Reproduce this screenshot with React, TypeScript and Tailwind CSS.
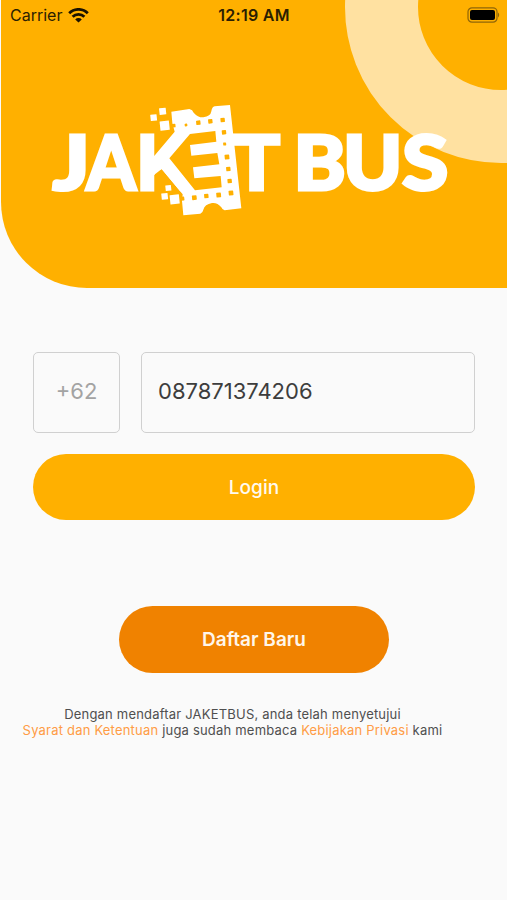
import React, { useState } from "react";

// perforations along the edge of the film strip
const holes = [
  [101, 92, 11], [138, 90, 8], [175, 83, 13], [211, 79, 13], [248, 75, 13],
  [252, 112, 13], [254, 147, 9], [261, 186, 14], [265, 222, 13], [269, 258, 13],
  [273, 294, 14], [236, 300, 14], [199, 303, 13], [163, 308, 14], [127, 311, 12],
];

const pixels = [
  [68, 49, 20], [41, 68, 19], [74, 92, 28],
  [85, 279, 17], [74, 304, 19], [104, 313, 28],
];

// x, horizontal stretch
const letters: [string, number, number][] = [
  ["J", 52.5, 1.13],
  ["A", 86.5, 0.92],
  ["K", 136, 1],
  ["T", 233, 1.02],
  ["B", 293.5, 1.03],
  ["U", 343, 1.04],
  ["S", 402, 1.1],
];

function StatusBar() {
  return (
    <div className="relative grid grid-cols-3 items-center h-[30px] pl-[10px] pr-[7px] text-[#2b1e02]">
      <div className="flex items-center gap-[6px]">
        <span className="text-[16px]">Carrier</span>
        <svg width="21" height="15" viewBox="0 0 21 15" fill="none" stroke="#1a1200" strokeWidth="2.8">
          <path d="M1.2 5.2a13.2 13.2 0 0 1 18.6 0" />
          <path d="M4.6 8.7a8.4 8.4 0 0 1 11.8 0" />
          <path d="M7.2 11.4a4.7 4.7 0 0 1 6.6 0L10.5 14.6z" fill="#1a1200" stroke="none" />
        </svg>
      </div>
      <span className="pr-0.5 text-center text-[16px] font-semibold tracking-[0.3px] whitespace-nowrap">12:19 AM</span>
      <svg className="justify-self-end -mt-px" width="33" height="16" viewBox="0 0 33 16">
        <rect x="1" y="0.8" width="29" height="14.4" rx="4" fill="none" stroke="#8f6508" strokeWidth="1.2" />
        <rect x="3" y="3" width="25" height="10" rx="2" fill="#000" />
        <path d="M31 5.6v4.8c1.6-.8 1.6-4 0-4.8z" fill="#8f6508" />
      </svg>
    </div>
  );
}

function Logo() {
  return (
    <svg className="block" width="507" height="130" viewBox="0 95 507 130" fill="#fff">
      <g fontFamily="Lato" fontWeight="900" fontSize="76.5" stroke="#fff" strokeWidth="3">
        {letters.map(([ch, x, sx]) => (
          <text key={ch} transform={`translate(${x} 189.8) scale(${sx} 1)`}>
            {ch}
          </text>
        ))}
      </g>
      <g transform="translate(140 95) scale(0.33333)">
        {/* keep the gaps around the K clean */}
        <path fill="#ffb000" d="M104 106L43 184V108H100ZM65 222L128 298L124 301H43V240Z" />
        <path
          d="M94 50L148 42Q158 44 161 53Q174 68 190 67Q212 64 214 49Q216 36 224 34L270 30L304 340L254 346Q247 345 244 337Q232 322 216 324Q194 328 190 344Q188 354 181 356L130 361L126 318L128 298L65 222L42 240V184L104 110L97 84Z"
        />
        <path fill="#ffb000" d="M88 190L150 117L226 108L229 140L150 150L154 182L232 174L238 208L159 217L163 250L242 243L245 277L165 286Z" />
        {holes.map(([x, y, s]) => (
          <rect key={`${x}-${y}`} x={x - s / 2} y={y - s / 2} width={s} height={s} rx="2" fill="#ffb000" transform={`rotate(-6 ${x} ${y})`} />
        ))}
        {pixels.map(([x, y, s]) => (
          <rect key={`${x}-${y}`} x={x - s / 2} y={y - s / 2} width={s} height={s} rx="1" transform={`rotate(-6 ${x} ${y})`} />
        ))}
      </g>
    </svg>
  );
}

export default function App() {
  const [phone, setPhone] = useState("087871374206");

  return (
    <main className="h-[900px] w-[507px] overflow-hidden bg-[#fafafa] font-['Inter',sans-serif]">
      {/* Header */}
      <header className="relative ml-px h-[288px] overflow-hidden rounded-bl-[86px] bg-[#ffb000]">
        <div className="absolute left-[344px] top-[-149px] size-[312px] rounded-full border-[73px] border-[#ffe1a1]" />
        <div className="relative -ml-px">
          <StatusBar />
          <div className="mt-[65px]">
            <Logo />
          </div>
        </div>
      </header>

      {/* Login form */}
      <form className="mt-16 flex flex-col pl-[33px]" onSubmit={(e) => e.preventDefault()}>
        <div className="flex gap-[21px]">
          <div className="flex h-[81px] w-[87px] items-center justify-center rounded-[5px] border-[1.5px] border-[#d0d0d0] pb-0.5 text-[22px] text-[#a3a3a3]">
            +62
          </div>
          <input
            className="h-[81px] w-[334px] rounded-[5px] border-[1.5px] border-[#d0d0d0] bg-transparent pb-1 pl-4 text-[22px] text-[#3d3d3d] outline-none"
            value={phone}
            onChange={(e) => setPhone(e.target.value)}
          />
        </div>
        <button className="mt-[21px] h-[66px] w-[442px] rounded-full bg-[#ffb000] pt-0.5 text-[19px] font-medium tracking-[0.1px] text-[#fffaf0]">
          Login
        </button>
        <button className="ml-[86px] mt-[86px] h-[67px] w-[270px] rounded-full bg-[#f08200] pt-px text-[19px] font-semibold text-[#fff6ea]">
          Daftar Baru
        </button>
      </form>

      {/* Terms */}
      <p className="mt-[33px] w-[465px] text-center text-[13px] leading-4 tracking-[0.2px] text-[#4f4f4f]">
        Dengan mendaftar JAKETBUS, anda telah menyetujui
        <br />
        <a className="text-[#ff9c45]">Syarat dan Ketentuan</a> juga sudah membaca{" "}
        <a className="text-[#ff9c45]">Kebijakan Privasi</a> kami
      </p>
    </main>
  );
}
